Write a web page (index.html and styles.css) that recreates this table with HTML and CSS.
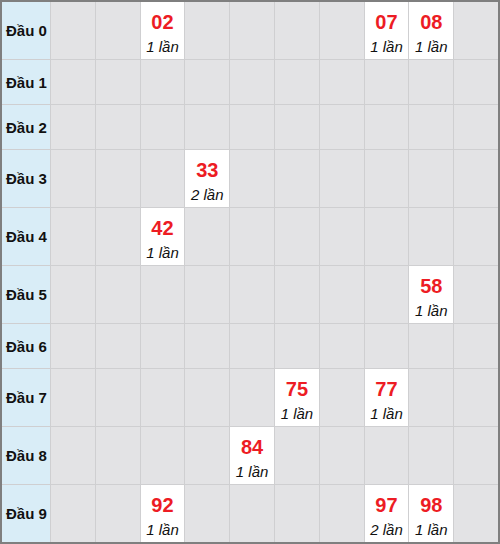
FILE: index.html
```html
<!DOCTYPE html>
<html lang="vi">
<head>
    <meta charset="UTF-8">
    <meta name="viewport" content="width=device-width, initial-scale=1.0">
    <title>Thống kê đầu loto</title>
    <link rel="stylesheet" href="styles.css">
</head>
<body>
    <div class="board">
        <!-- Đầu 0 -->
        <div class="head tall">Đầu 0</div>
        <div class="cell"></div><div class="cell"></div>
        <div class="cell hit"><span class="num">02</span><span class="count">1 lần</span></div>
        <div class="cell"></div><div class="cell"></div><div class="cell"></div><div class="cell"></div>
        <div class="cell hit"><span class="num">07</span><span class="count">1 lần</span></div>
        <div class="cell hit"><span class="num">08</span><span class="count">1 lần</span></div>
        <div class="cell"></div>

        <!-- Đầu 1 -->
        <div class="head">Đầu 1</div>
        <div class="cell"></div><div class="cell"></div><div class="cell"></div><div class="cell"></div><div class="cell"></div>
        <div class="cell"></div><div class="cell"></div><div class="cell"></div><div class="cell"></div><div class="cell"></div>

        <!-- Đầu 2 -->
        <div class="head">Đầu 2</div>
        <div class="cell"></div><div class="cell"></div><div class="cell"></div><div class="cell"></div><div class="cell"></div>
        <div class="cell"></div><div class="cell"></div><div class="cell"></div><div class="cell"></div><div class="cell"></div>

        <!-- Đầu 3 -->
        <div class="head tall">Đầu 3</div>
        <div class="cell"></div><div class="cell"></div><div class="cell"></div>
        <div class="cell hit"><span class="num">33</span><span class="count">2 lần</span></div>
        <div class="cell"></div><div class="cell"></div><div class="cell"></div><div class="cell"></div><div class="cell"></div><div class="cell"></div>

        <!-- Đầu 4 -->
        <div class="head tall">Đầu 4</div>
        <div class="cell"></div><div class="cell"></div>
        <div class="cell hit"><span class="num">42</span><span class="count">1 lần</span></div>
        <div class="cell"></div><div class="cell"></div><div class="cell"></div><div class="cell"></div><div class="cell"></div><div class="cell"></div><div class="cell"></div>

        <!-- Đầu 5 -->
        <div class="head tall">Đầu 5</div>
        <div class="cell"></div><div class="cell"></div><div class="cell"></div><div class="cell"></div>
        <div class="cell"></div><div class="cell"></div><div class="cell"></div><div class="cell"></div>
        <div class="cell hit"><span class="num">58</span><span class="count">1 lần</span></div>
        <div class="cell"></div>

        <!-- Đầu 6 -->
        <div class="head">Đầu 6</div>
        <div class="cell"></div><div class="cell"></div><div class="cell"></div><div class="cell"></div><div class="cell"></div>
        <div class="cell"></div><div class="cell"></div><div class="cell"></div><div class="cell"></div><div class="cell"></div>

        <!-- Đầu 7 -->
        <div class="head tall">Đầu 7</div>
        <div class="cell"></div><div class="cell"></div><div class="cell"></div><div class="cell"></div><div class="cell"></div>
        <div class="cell hit"><span class="num">75</span><span class="count">1 lần</span></div>
        <div class="cell"></div>
        <div class="cell hit"><span class="num">77</span><span class="count">1 lần</span></div>
        <div class="cell"></div><div class="cell"></div>

        <!-- Đầu 8 -->
        <div class="head tall">Đầu 8</div>
        <div class="cell"></div><div class="cell"></div><div class="cell"></div><div class="cell"></div>
        <div class="cell hit"><span class="num">84</span><span class="count">1 lần</span></div>
        <div class="cell"></div><div class="cell"></div><div class="cell"></div><div class="cell"></div><div class="cell"></div>

        <!-- Đầu 9 -->
        <div class="head tall">Đầu 9</div>
        <div class="cell"></div><div class="cell"></div>
        <div class="cell hit"><span class="num">92</span><span class="count">1 lần</span></div>
        <div class="cell"></div><div class="cell"></div><div class="cell"></div><div class="cell"></div>
        <div class="cell hit"><span class="num">97</span><span class="count">2 lần</span></div>
        <div class="cell hit"><span class="num">98</span><span class="count">1 lần</span></div>
        <div class="cell"></div>
    </div>
</body>
</html>
```

FILE: styles.css
```css
body {
    margin: 0;
    font-family: "Liberation Sans", Arial, sans-serif;
    background-color: #fff;
}

.board {
    width: 500px;
    height: 544px;
    box-sizing: border-box;
    border: 2px solid #7f7f7f;
    display: grid;
    grid-template-columns: 48px repeat(10, 1fr);
    grid-template-rows: 57px 44px 44px 57px 57px 57px 44px 57px 57px 57px;
    gap: 1px;
    background-color: #cfcfd1;
}

.head {
    background-color: #d9edf7;
    display: flex;
    align-items: center;
    padding-left: 4px;
    font-size: 15px;
    font-weight: bold;
    color: #111;
}

.cell {
    background-color: #e3e3e5;
}

.cell.hit {
    background-color: #fff;
    display: flex;
    flex-direction: column;
    align-items: center;
    justify-content: center;
    padding-top: 6px;
}

.num {
    color: #ed1c24;
    font-size: 20px;
    font-weight: bold;
    line-height: 24px;
}

.count {
    font-size: 15px;
    font-style: italic;
    color: #111;
    line-height: 22px;
    margin-top: 2px;
}
```
